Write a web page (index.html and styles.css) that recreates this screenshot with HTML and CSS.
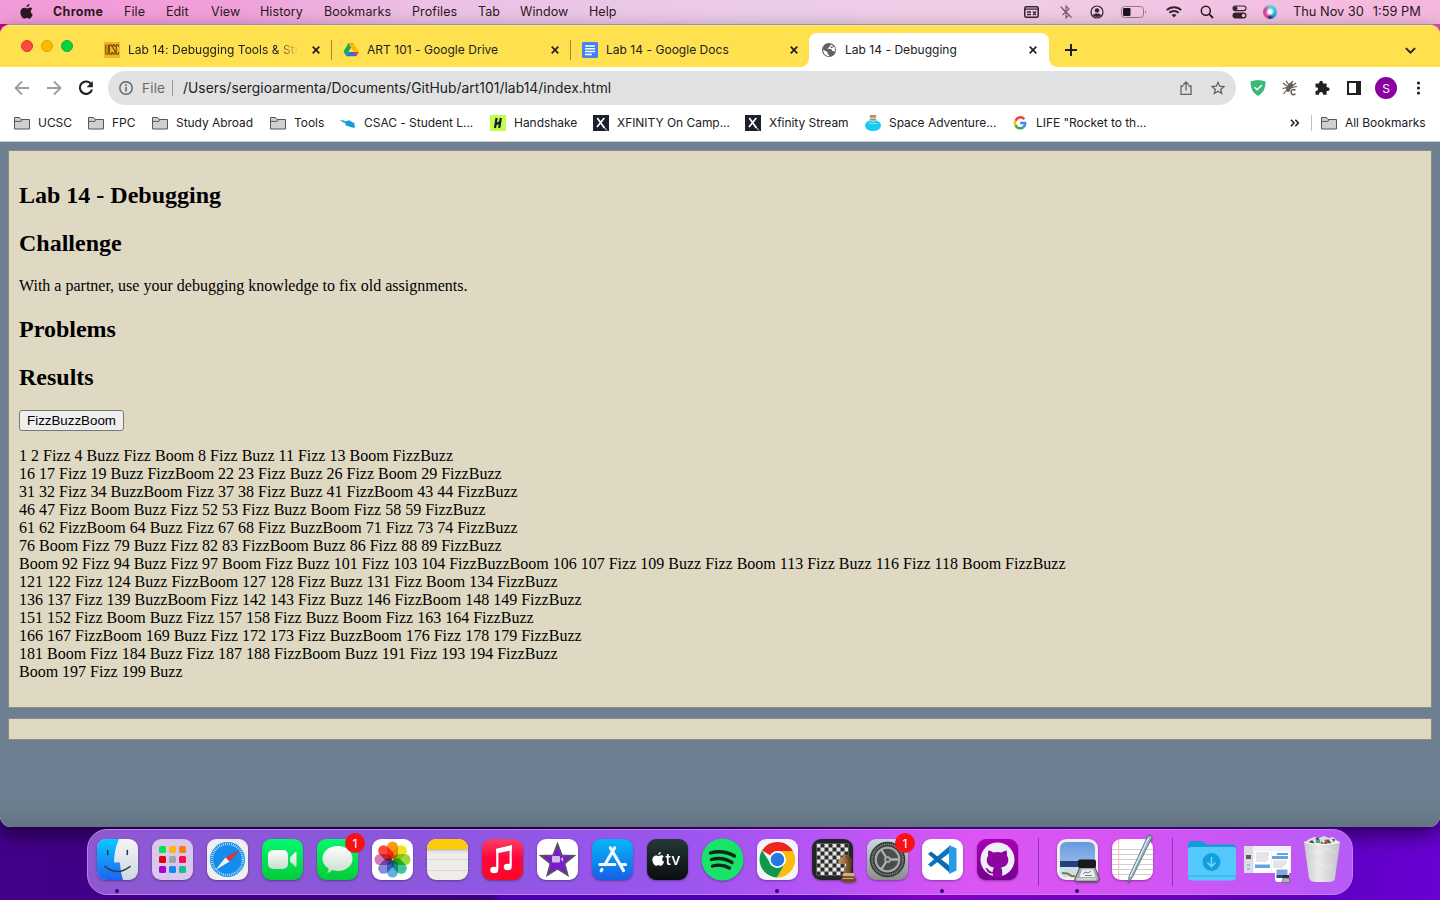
FILE: index.html
```html
<!DOCTYPE html>
<html lang="en">
<head>
<meta charset="utf-8">
<title>Lab 14 - Debugging</title>
<link rel="stylesheet" href="styles.css">
</head>
<body>
<svg width="0" height="0" class="defs"><defs>
  <path id="i-apple" d="M10.200 0c.1 1.300-1.200 3.200-3.200 3.400C6.800 1.900 8.300.2 10.200 0zM13.200 5.300c-2.400 1.500-2 4.700.5 5.700-.7 2-2 4.700-3.700 4.700-1 0-1.500-.6-2.700-.6s-1.800.6-2.700.6C2.500 15.700.4 12 .4 8.900c0-3.200 2-5 4.200-5 1.200 0 2.100.8 2.900.8.900 0 1.900-.9 3.300-.9 1 0 1.900.5 2.400 1.500z"/>
  <path id="i-x" d="M.7.7l6.600 6.600M7.300.7L.7 7.300"/>
  <g id="i-folder" stroke="#555"><path d="M.5 14v-11.500h5l1.500 2h8.500v9.500z" fill="#d0d0d0"/><path d="M1 6.400h6l1.200-1.600" fill="none"/></g>
  <g id="i-xf"><rect width="16" height="16" fill="#1c202e"/><path d="M4.300 3l7.200 10M11.300 3L4 12" stroke="#fff" stroke-width="1.700"/><path d="M10.500 11.500l3.500 4" stroke="#fff"/></g>
  <rect id="petal" x="15" y="2.500" width="11" height="17.500" rx="5.500"/>
  <linearGradient id="blue" x2="0" y2="1"><stop stop-color="#05cbff"/><stop offset="1" stop-color="#2261f2"/></linearGradient>
  <linearGradient id="silver" x2="0" y2="1"><stop stop-color="#f4f4f6"/><stop offset="1" stop-color="#cfd8e1"/></linearGradient>
  <linearGradient id="green" x2="0" y2="1"><stop stop-color="#04f971"/><stop offset="1" stop-color="#04cb39"/></linearGradient>
  <linearGradient id="red" x2="0" y2="1"><stop stop-color="#fb4166"/><stop offset=".45" stop-color="#ff073c"/><stop offset="1" stop-color="#fa0725"/></linearGradient>
  <linearGradient id="store" x2="0" y2="1"><stop stop-color="#05b7f7"/><stop offset="1" stop-color="#1760e5"/></linearGradient>
  <linearGradient id="black" x2="0" y2="1"><stop stop-color="#263737"/><stop offset="1" stop-color="#0a0d10"/></linearGradient>
  <linearGradient id="grey" x2="0" y2="1"><stop stop-color="#c8d8e1"/><stop offset="1" stop-color="#8d8d88"/></linearGradient>
  <linearGradient id="white" x2="0" y2="1"><stop stop-color="#fff"/><stop offset="1" stop-color="#c8ddce"/></linearGradient>
  <linearGradient id="sky" x2="0" y2="1"><stop stop-color="#6699df"/><stop offset="1" stop-color="#b2cbf0"/></linearGradient>
  <linearGradient id="hub" x2="0" y2="1"><stop stop-color="#a800b6"/><stop offset="1" stop-color="#74008c"/></linearGradient>
  <linearGradient id="wood" x2="1" y2="0"><stop stop-color="#c99a62"/><stop offset=".5" stop-color="#94693c"/><stop offset="1" stop-color="#49301c"/></linearGradient>
  <linearGradient id="can"><stop stop-color="#c8c9cb"/><stop offset=".4" stop-color="#eaeaea"/><stop offset="1" stop-color="#c3c4c6"/></linearGradient>
  <pattern id="chk" width="8" height="8" patternUnits="userSpaceOnUse"><path d="M0 0h8v8H0z" fill="#2b2b2b"/><path d="M0 0h4v4H0zM4 4h4v4H4z" fill="#e5e5e5"/></pattern>
  <clipPath id="tile"><rect width="41" height="41" rx="9"/></clipPath>
</defs></svg>
<div class="desktop">
<header class="menubar">
  <svg class="apple" viewBox="0 0 14 16"><use href="#i-apple"/></svg>
  <nav class="menus"><b>Chrome</b><span>File</span><span>Edit</span><span>View</span><span>History</span><span>Bookmarks</span><span>Profiles</span><span>Tab</span><span>Window</span><span>Help</span></nav>
  <div class="status">
    <svg width="15" height="12" viewBox="0 0 15 12"><rect x=".8" y=".8" width="13.400" height="10.400" rx="1.500" fill="none" stroke="#38222f" stroke-width="1.500"/><path d="M1 3.200h13M3 6h4M3 8.500h4M9 5.500l3 3.500M12 5.500L9 9" stroke="#38222f" stroke-width="1.300"/></svg>
    <svg width="12" height="14" viewBox="0 0 12 14"><path d="M2.500 10l6.500-6L6 1v12l3-3-6.500-6M.5 1.500l11 11" fill="none" stroke="#7b5a70" stroke-width="1.100"/></svg>
    <svg width="14" height="14" viewBox="0 0 14 14"><circle cx="7" cy="7" r="6" fill="none" stroke="#38222f" stroke-width="1.200"/><circle cx="7" cy="5.400" r="2.200" fill="#38222f"/><path d="M3 10.300c1-2.500 7-2.500 8 0-2 2.300-6 2.300-8 0z" fill="#38222f"/></svg>
    <svg width="26" height="12" viewBox="0 0 26 12"><rect x=".5" y=".5" width="22" height="11" rx="3" fill="none" stroke="#98758d"/><rect x="2" y="2" width="7.500" height="8" rx="1.300" fill="#20131b"/><path d="M24.300 4.200c1.300.6 1.300 3 0 3.600z" fill="#98758d"/></svg>
    <svg width="16" height="12" viewBox="0 0 16 12"><path d="M.8 4.200c4-4 10.400-4 14.400 0M3.300 6.800c2.700-2.500 6.700-2.500 9.400 0" fill="none" stroke="#38222f" stroke-width="1.900"/><path d="M5.600 9c1.500-1.300 3.300-1.300 4.800 0L8 11.600z" fill="#38222f"/></svg>
    <svg width="14" height="14" viewBox="0 0 14 14"><circle cx="5.800" cy="5.800" r="4.500" fill="none" stroke="#2b1824" stroke-width="1.500"/><path d="M9.200 9.200l3.800 3.800" stroke="#2b1824" stroke-width="1.800"/></svg>
    <svg width="15" height="14" viewBox="0 0 15 14"><rect x="1" y="1" width="13" height="4.600" rx="2.300" fill="none" stroke="#38222f" stroke-width="1.100"/><circle cx="3.500" cy="3.300" r="2" fill="#38222f"/><rect x=".5" y="7.500" width="14" height="6" rx="3" fill="#38222f"/><circle cx="11.500" cy="10.500" r="1.700" fill="#edc3e2"/></svg>
    <span class="siri"></span>
  </div>
  <div class="clock"><span>Thu Nov 30</span><span>1:59 PM</span></div>
</header>

<main class="window">
  <div class="tabs">
    <div class="lights"><i></i><i></i><i></i></div>
    <div class="tab"><svg class="fav" viewBox="0 0 16 16"><rect width="16" height="16" fill="#f7b318"/><path d="M1.800 2.500v8q0 2 1.200 2t1.200-2v-8M7.700 5V3.500q-1.200-2-2.300 0v8q1.100 2 2.300 0V10M11 5V3.500q-1.200-1.700-2.200 0v2.300L11 9v2.500q-1.100 2-2.200 0V10M14.400 5V3.500q-1.100-2-2.200 0v8q1.100 2 2.200 0V10" fill="none" stroke="#665019" stroke-width="1.100"/></svg><span class="title fade">Lab 14: Debugging Tools &amp; Str</span><svg class="x" viewBox="0 0 8 8"><use href="#i-x"/></svg></div>
    <div class="tab"><svg class="fav" viewBox="0 0 16 16"><path d="M5.400 1.200h5.200L5.500 10 3.200 14.200.5 9.500z" fill="#0da960"/><path d="M5.400 1.200h5.200L8 5.700z" fill="#188038"/><path d="M10.600 1.200L15.700 10h-5.200L5.400 1.200z" fill="#ffba00"/><path d="M3.200 14.200L5.700 10h10l-2.600 4.200z" fill="#2d6fdd"/><path d="M10.500 10h5.200l-2.600 4.200z" fill="#ea4335"/><path d="M8 5.700L10.500 10H5.600z" fill="#ffe14f"/></svg><span class="title">ART 101 - Google Drive</span><svg class="x" viewBox="0 0 8 8"><use href="#i-x"/></svg></div>
    <div class="tab"><svg class="fav" viewBox="0 0 16 16"><rect width="16" height="16" rx="1.500" fill="#4680f5"/><path d="M3 4h10M3 6.800h10M3 9.600h10M3 12.400h7" stroke="#fff" stroke-width="1.500"/></svg><span class="title">Lab 14 - Google Docs</span><svg class="x" viewBox="0 0 8 8"><use href="#i-x"/></svg></div>
    <div class="tab active"><svg class="fav" viewBox="0 0 16 16"><circle cx="8" cy="8" r="7" fill="#5f6368"/><path d="M2.200 7.800l4.300 2.300v1.500l1.600 1.600v1C4.500 14 2 11.300 2.200 7.800zM9.600 2.200v1.600L7.700 5v1.300L5.800 7h4.500l1 2h1.300l1 1c1-2.300.4-4.400-.8-5.600L11 6H9.700V4.500h2L12 3.700z" fill="#fff"/></svg><span class="title">Lab 14 - Debugging</span><svg class="x" viewBox="0 0 8 8"><use href="#i-x"/></svg></div>
    <svg class="plus" viewBox="0 0 12 12"><path d="M6 0v12M0 6h12"/></svg>
    <svg class="chev" viewBox="0 0 10 6"><path d="M.8.8L5 5 9.200.8"/></svg>
  </div>
  <div class="toolbar">
    <svg class="nav" viewBox="0 0 16 16"><path d="M15 8H2M8 1.500L1.500 8 8 14.500" stroke="#9e9e9e"/></svg>
    <svg class="nav" viewBox="0 0 16 16"><path d="M1 8h13M8 1.500L14.500 8 8 14.500" stroke="#9e9e9e"/></svg>
    <svg class="nav" viewBox="0 0 16 16"><path d="M13.400 4.500A6.200 6.200 0 1 0 14 9.500" stroke="#202124" stroke-width="2.100"/><path d="M14.800 1v6.200H8.600z" fill="#202124"/></svg>
    <div class="omni">
      <svg width="14" height="14" viewBox="0 0 14 14"><circle cx="7" cy="7" r="6.200" fill="none" stroke="#5f6368" stroke-width="1.400"/><path d="M7 6v4.600M7 3.300v1.600" stroke="#5f6368" stroke-width="1.500"/></svg>
      <span class="scheme">File</span><i></i><span class="url">/Users/sergioarmenta/Documents/GitHub/art101/lab14/index.html</span>
      <svg class="share" width="12" height="14" viewBox="0 0 12 14"><path d="M3.500 5H1v8.300h10V5H8.500M6 9.500V1M3.300 3.700L6 1l2.700 2.700" fill="none" stroke="#5f6368" stroke-width="1.300"/></svg>
      <svg width="14" height="14" viewBox="0 0 14 14"><path d="M7 1.300l1.700 3.900 4.200.4-3.200 2.800 1 4.100L7 10.300l-3.700 2.200 1-4.100L1.100 5.600l4.200-.4z" fill="none" stroke="#5f6368" stroke-width="1.300"/></svg>
    </div>
    <div class="exts">
      <svg viewBox="0 0 16 16"><path d="M8 0c2.500 0 5 .5 7.500 1.500 0 6-1.500 11-7.500 14.500C2 12.500.5 7.500.5 1.500 3 .5 5.500 0 8 0z" fill="#3bb877"/><path d="M4.500 7.200l2.700 2.600L11.800 5" fill="none" stroke="#fff" stroke-width="1.500"/></svg>
      <svg viewBox="0 0 16 16"><path d="M4 .8l2.200 3M11 .8L8.800 3.800M1 3l4 3M14 3l-4 3M.5 8.500L5 7.600M15 6.500l-5 .8M1.500 14L5 9.500" stroke="#675f57" fill="none" stroke-width="1.200"/><ellipse cx="7.500" cy="7.200" rx="2.700" ry="5" transform="rotate(25 7.500 7.200)" fill="#675f57"/><path d="M13.500 10.200q-4-2-4.500 1.800 .5 4 4.500 2" fill="none" stroke="#fff" stroke-width="3"/><path d="M13.500 10.200q-4-2-4.500 1.800 .5 4 4.500 2" fill="none" stroke="#675f57" stroke-width="1.600"/></svg>
      <svg viewBox="0 0 16 16"><path d="M1.500 3.500h3.800c-.8-3.700 4.300-3.700 3.600 0h3.700v3.700c4-.7 4 4.400 0 3.700v3.900H9c.6-3.700-4.500-3.700-3.900 0H1.500v-3.900c3.400.4 3.400-4 0-3.600z" fill="#202124"/></svg>
      <svg viewBox="0 0 16 16"><rect x="2" y="2" width="12" height="12" fill="none" stroke="#202124" stroke-width="2"/><path d="M10 2h4v12h-4z" fill="#202124"/></svg>
      <span class="avatar">S</span>
      <svg viewBox="0 0 16 16"><g fill="#202124"><circle cx="8.500" cy="3" r="1.600"/><circle cx="8.500" cy="8" r="1.600"/><circle cx="8.500" cy="13" r="1.600"/></g></svg>
    </div>
  </div>
  <div class="bookmarks">
    <div><svg viewBox="0 0 16 16"><use href="#i-folder"/></svg><span>UCSC</span></div>
    <div><svg viewBox="0 0 16 16"><use href="#i-folder"/></svg><span>FPC</span></div>
    <div><svg viewBox="0 0 16 16"><use href="#i-folder"/></svg><span>Study Abroad</span></div>
    <div><svg viewBox="0 0 16 16"><use href="#i-folder"/></svg><span>Tools</span></div>
    <div><svg viewBox="0 0 16 16"><path d="M.3 5.200l4 .3.800 1 4-1.200 6 3.500-.8.700.9 3-2 .2-2.700-.7-4.500-1.500L5 8 1 6.300z" fill="#159bd5"/></svg><span>CSAC - Student L...</span></div>
    <div><svg viewBox="0 0 16 16"><rect width="16" height="16" fill="#c5fc4c"/><path d="M6.600 3L5 13M10.800 3L9.200 13M5.800 9.200l4.300-2" stroke="#111e25" stroke-width="2.200"/></svg><span>Handshake</span></div>
    <div><svg viewBox="0 0 16 16"><use href="#i-xf"/></svg><span>XFINITY On Camp...</span></div>
    <div><svg viewBox="0 0 16 16"><use href="#i-xf"/></svg><span>Xfinity Stream</span></div>
    <div><svg viewBox="0 0 16 16"><ellipse cx="8" cy="10.500" rx="8" ry="5.500" fill="#1bc9f5"/><path d="M5.500 3h5v4h-5z" fill="#93d6d0"/><path d="M4.800 0h6.400v2.800H4.800zM4.600 4h6.800v1.300H4.600z" fill="#b09365"/><path d="M4 8.500h8" stroke="#78e9ff"/></svg><span>Space Adventure...</span></div>
    <div><svg viewBox="0 0 16 16"><g fill="none" stroke-width="2.500"><path d="M12.300 4.300A5 5 0 0 0 3.600 5.800" stroke="#ea4335"/><path d="M3.600 5.500a5.200 5.200 0 0 0 0 5" stroke="#fbbc04"/><path d="M3.500 10.200a5 5 0 0 0 7.800 2" stroke="#34a853"/><path d="M8.200 8h5a5 5 0 0 1-2 4.300" stroke="#4285f4"/></g></svg><span>LIFE "Rocket to th...</span></div>
    <svg class="more" viewBox="0 0 10 8"><path d="M1 .8L4 4 1 7.200M5.300.8l3 3.200-3 3.200"/></svg>
    <div class="all"><svg viewBox="0 0 16 16"><use href="#i-folder"/></svg><span>All Bookmarks</span></div>
  </div>
  <div class="page">
    <section class="box">
      <h2>Lab 14 - Debugging</h2>
      <h2>Challenge</h2>
      <p>With a partner, use your debugging knowledge to fix old assignments.</p>
      <h2>Problems</h2>
      <h2>Results</h2>
      <button>FizzBuzzBoom</button>
      <p class="output">1 2 Fizz 4 Buzz Fizz Boom 8 Fizz Buzz 11 Fizz 13 Boom FizzBuzz<br>
16 17 Fizz 19 Buzz FizzBoom 22 23 Fizz Buzz 26 Fizz Boom 29 FizzBuzz<br>
31 32 Fizz 34 BuzzBoom Fizz 37 38 Fizz Buzz 41 FizzBoom 43 44 FizzBuzz<br>
46 47 Fizz Boom Buzz Fizz 52 53 Fizz Buzz Boom Fizz 58 59 FizzBuzz<br>
61 62 FizzBoom 64 Buzz Fizz 67 68 Fizz BuzzBoom 71 Fizz 73 74 FizzBuzz<br>
76 Boom Fizz 79 Buzz Fizz 82 83 FizzBoom Buzz 86 Fizz 88 89 FizzBuzz<br>
Boom 92 Fizz 94 Buzz Fizz 97 Boom Fizz Buzz 101 Fizz 103 104 FizzBuzzBoom 106 107 Fizz 109 Buzz Fizz Boom 113 Fizz Buzz 116 Fizz 118 Boom FizzBuzz<br>
121 122 Fizz 124 Buzz FizzBoom 127 128 Fizz Buzz 131 Fizz Boom 134 FizzBuzz<br>
136 137 Fizz 139 BuzzBoom Fizz 142 143 Fizz Buzz 146 FizzBoom 148 149 FizzBuzz<br>
151 152 Fizz Boom Buzz Fizz 157 158 Fizz Buzz Boom Fizz 163 164 FizzBuzz<br>
166 167 FizzBoom 169 Buzz Fizz 172 173 Fizz BuzzBoom 176 Fizz 178 179 FizzBuzz<br>
181 Boom Fizz 184 Buzz Fizz 187 188 FizzBoom Buzz 191 Fizz 193 194 FizzBuzz<br>
Boom 197 Fizz 199 Buzz</p>
    </section>
    <section class="box"></section>
  </div>
</main>

<footer class="dock">
  <div class="app run"><svg viewBox="0 0 41 41"><g clip-path="url(#tile)"><path d="M0 0h41v41H0z" fill="url(#silver)"/><path d="M0 0h22q-5 11-5 23.500h6q0 9 3 17.500H0z" fill="url(#blue)"/></g><path d="M8 27.500q12.500 10 25 0M10.700 11.500v4M30.300 11.500v4" fill="none" stroke="#243b50" stroke-width="1.600" stroke-linecap="round"/></svg></div>
  <div class="app"><svg viewBox="0 0 41 41"><rect width="41" height="41" rx="9" fill="#dac7ee"/><g><rect x="7" y="7" width="7" height="7" rx="1.500" fill="#10df4d"/><rect x="17" y="7" width="7" height="7" rx="1.500" fill="#fdb90b"/><rect x="27" y="7" width="7" height="7" rx="1.500" fill="#f97d0c"/><rect x="7" y="17" width="7" height="7" rx="1.500" fill="#e20309"/><rect x="17" y="17" width="7" height="7" rx="1.500" fill="#a0a5aa"/><rect x="27" y="17" width="7" height="7" rx="1.500" fill="#fb0850"/><rect x="7" y="27" width="7" height="7" rx="1.500" fill="#a707cb"/><rect x="17" y="27" width="7" height="7" rx="1.500" fill="#1289f3"/><rect x="27" y="27" width="7" height="7" rx="1.500" fill="#15bd91"/></g></svg></div>
  <div class="app"><svg viewBox="0 0 41 41"><rect width="41" height="41" rx="9" fill="#efefef"/><circle cx="20.500" cy="20.500" r="17.500" fill="#148ced"/><circle cx="20.500" cy="20.500" r="15.500" fill="none" stroke="#cbe9ff" stroke-width="2.500" stroke-dasharray=".8 1.200"/><path d="M33 10.500L22.500 22.500l-4-4z" fill="#ed302c"/><path d="M8.500 31L18.500 18.500l4 4z" fill="#f2f5f7"/></svg></div>
  <div class="app"><svg viewBox="0 0 41 41"><rect width="41" height="41" rx="9" fill="url(#green)"/><rect x="6" y="11" width="20" height="19" rx="5" fill="url(#white)"/><path d="M28 18.500l5.500-5.500q1-.5 1 .8v13.500q0 1-1 .5L28 22.500z" fill="url(#white)"/></svg></div>
  <div class="app"><svg viewBox="0 0 41 41"><rect width="41" height="41" rx="9" fill="url(#green)"/><path d="M20.500 7C29 7 35.500 12.500 35.500 19.700S29 32 20.500 32c-2 0-4-.3-5.500-.9-1.500 1.600-3 2.600-5 2.900 1.300-1.500 1.700-3 1.500-4.700C7.500 27 5.500 23.500 5.500 19.700 5.500 12.500 12 7 20.500 7z" fill="url(#white)"/></svg><span class="badge">1</span></div>
  <div class="app"><svg viewBox="0 0 41 41"><rect width="41" height="41" rx="9" fill="#fff"/><g class="petals"><use href="#petal" fill="#fb9a1b"/><use href="#petal" fill="#ece51b" transform="rotate(45 20.500 20.500)"/><use href="#petal" fill="#9bd83c" transform="rotate(90 20.500 20.500)"/><use href="#petal" fill="#3cc796" transform="rotate(135 20.500 20.500)"/><use href="#petal" fill="#5fb1e2" transform="rotate(180 20.500 20.500)"/><use href="#petal" fill="#8a8ad6" transform="rotate(225 20.500 20.500)"/><use href="#petal" fill="#d07cbc" transform="rotate(270 20.500 20.500)"/><use href="#petal" fill="#fa4a40" transform="rotate(315 20.500 20.500)"/></g></svg></div>
  <div class="app"><svg viewBox="0 0 41 41"><g clip-path="url(#tile)"><path d="M0 0h41v41H0z" fill="#efedea"/><path d="M0 0h41v10.500H0z" fill="#fecb08"/><path d="M0 11h41" stroke="#b5afa4"/><path d="M0 20.500h41M0 31.500h41" stroke="#d3d0cc" stroke-width=".8"/><path d="M1 13h39" stroke="#c9c5bf" stroke-dasharray="1 1"/></g></svg></div>
  <div class="app"><svg viewBox="0 0 41 41"><rect width="41" height="41" rx="9" fill="url(#red)"/><path d="M15.300 30V11l13.400-3.300V27" fill="none" stroke="#fff" stroke-width="2.200"/><path d="M14.200 9.800l15.600-3.500v4.900L14.200 14.500z" fill="#fff"/><ellipse cx="12.200" cy="31" rx="4" ry="3.200" fill="#fff"/><ellipse cx="25.700" cy="28" rx="4" ry="3.200" fill="#fff"/></svg></div>
  <div class="app"><svg viewBox="0 0 41 41"><rect width="41" height="41" rx="9" fill="#fff"/><path d="M20.500 5l4.300 11.300 12.200.5-9.500 7.700 3.100 11.500-10.100-6.300L10.400 36l3.100-11.500L4 16.800l12.200-.5z" fill="#8017d5" stroke="#555263" stroke-width="1.800"/><rect x="15" y="17" width="8" height="6.500" rx="1" fill="#cebde3"/><path d="M23.500 20l2.600-2v5z" fill="#cebde3"/></svg></div>
  <div class="app"><svg viewBox="0 0 41 41"><rect width="41" height="41" rx="9" fill="url(#store)"/><path d="M18.300 8.800L31.500 31.500M22.700 8.800L13 25.500M10 30.500l-.8 1.200M7.800 25.500h15M29.500 25.500h4" fill="none" stroke="#edf7ff" stroke-width="3.200" stroke-linecap="round"/></svg></div>
  <div class="app"><svg viewBox="0 0 41 41"><rect width="41" height="41" rx="9" fill="url(#black)"/><use href="#i-apple" transform="translate(5 13) scale(.88)" fill="#fff"/><text x="18.500" y="26.300" class="tv">tv</text></svg></div>
  <div class="app"><svg viewBox="0 0 41 41"><circle cx="20.500" cy="20.500" r="21" fill="#17e469"/><path d="M8.500 14q12-3.500 24 3M9.500 20.500q11-3 20.500 3M10.500 27q9.500-2.500 17 2" fill="none" stroke="#10251b" stroke-width="3.300" stroke-linecap="round"/></svg></div>
  <div class="app run"><svg viewBox="0 0 41 41"><rect width="41" height="41" rx="9" fill="#f5f3fb"/><path d="M20.500 20.500L5 11.500A18 18 0 0 1 36 12H20.500z" fill="#e92620"/><path d="M5 11.500A18 18 0 0 0 20 38.500l8-13.500-14 0z" fill="#10994b"/><path d="M20.500 12H36A18 18 0 0 1 20 38.500L28 25z" fill="#fcbc0a"/><circle cx="20.500" cy="20.500" r="8.500" fill="#fff"/><circle cx="20.500" cy="20.500" r="6.800" fill="#2577e5"/></svg></div>
  <div class="app"><svg viewBox="0 0 41 41"><rect width="41" height="41" rx="9" fill="#242326"/><rect width="32" height="32" fill="url(#chk)" transform="translate(4.500 4.500)"/><path d="M31.500 13.500l2.500 2c5 2 7.500 6 6 11q-1.500 4-1 8.500h-7.500q0-5 2.500-8.500l.5-3-5 2-3.500-2 1-3 4-3.500z" fill="url(#wood)"/><path d="M34 17q5 4 3.500 9" stroke="#5b3d22" fill="none"/><rect x="30.500" y="34" width="12" height="3.500" rx="1.700" fill="#d3ad7c"/><path d="M31 37.500h11l2.500 3q0 3-8 3t-8-3z" fill="#6b4a2a"/><path d="M30.500 39.500h11" stroke="#c79e68" stroke-width="1.200"/></svg></div>
  <div class="app"><svg viewBox="0 0 41 41"><rect width="41" height="41" rx="9" fill="url(#grey)"/><circle cx="20.500" cy="20.500" r="17.800" fill="#35383a"/><circle cx="20.500" cy="20.500" r="15.300" fill="none" stroke="#7f8383" stroke-width="2" stroke-dasharray="1.200 .8"/><circle cx="20.500" cy="20.500" r="11.800" fill="#4a4d4e" stroke="#a6a9a9" stroke-width="2.300"/><path d="M20.500 20.500h11M20.500 20.500L14.500 11M20.500 20.500L14.500 30" stroke="#b0b3b3" stroke-width="2.300"/><circle cx="20.500" cy="20.500" r="2.600" fill="#595c5d" stroke="#b0b3b3" stroke-width="1.500"/></svg><span class="badge">1</span></div>
  <div class="app run"><svg viewBox="0 0 41 41"><rect width="41" height="41" rx="9" fill="#fff"/><path d="M6 25.500l3 2.500 19-14.500V6.500z" fill="#0876be"/><path d="M6 15l3-2.500 19 14.500v7z" fill="#0b69ad"/><path d="M27 6l7.500 3.500v22L27 35z" fill="#269ce8"/></svg></div>
  <div class="app"><svg viewBox="0 0 41 41"><rect width="41" height="41" rx="9" fill="url(#hub)"/><circle cx="20.500" cy="20.500" r="17" fill="#efedf6"/><path d="M11.500 11.500q2.800.4 5 2 4-1 8 0 2.500-1.700 5-2 1 2.500.3 5 1.700 2 1.500 5-.3 6-7.300 7 1.200 1.500 1.200 4v6h-9.400v-4q-4.300.6-5.800-2.500-.8-2-2-2.800 2.500-.5 4 2 1.500 2 3.800 1.200.2-2.500 1.200-3.900-7-1-7.300-7 0-3 1.500-5-.7-2.500.3-5z" fill="#8d05a0"/></svg></div>
  <i class="sep first"></i>
  <div class="app run"><svg viewBox="0 0 41 41"><rect width="41" height="41" rx="9" fill="#efeff2"/><rect x="3" y="3" width="35" height="35" rx="6" fill="url(#sky)"/><path d="M3 22h35v7H3z" fill="#293d7f"/><path d="M3 28h35v4q0 6-6 6H9q-6 0-6-6z" fill="#c7e3e8"/><path d="M5 34q6 0 8 2t5 1" stroke="#8e7046" stroke-width="2" fill="none"/><path d="M23 28h15l4 11.500q0 3-3 3H21q-4 0-3-3z" fill="#a8adaf" stroke="#4d5256"/><rect x="21" y="20.500" width="18" height="8.500" rx="2" fill="#17191c"/><path d="M25 30.500h11l2.500 7.500H22.500z" fill="#eef1f2"/><path d="M26 35l2-2 3 1 3-2M28 36.500h7" stroke="#4f6b78" stroke-width=".8" fill="none"/><path d="M20 40h19" stroke="#e8eaea" stroke-width="1.200"/></svg></div>
  <div class="app"><svg viewBox="0 0 41 41"><rect width="41" height="41" rx="9" fill="#fff"/><path d="M0 10.500h41M0 15.500h41M0 20.500h41M0 25.500h41M0 30.500h41M2 35.500h37" stroke="#c9c9cc" stroke-width=".9"/><path d="M6.700 1v39" stroke="#f5b9b9"/><path d="M36-3.500l3-.5 1 2.500L20.500 38l-4 6 .5-6.500z" fill="#94b1bf" stroke="#4e6470" stroke-width=".8"/><path d="M36.500-1L18 38" stroke="#e5f2f7" stroke-width="1.200"/></svg></div>
  <i class="sep second"></i>
  <svg class="folder" viewBox="0 0 48 42"><path d="M0 6q0-4 4-4h9q3 0 5 3.500h26q4 0 4 4v28H0z" fill="#119dd6"/><path d="M0 11q0-3 3-3h42q3 0 3 3v27q0 3.500-3.500 3.500h-41Q0 41.500 0 38z" fill="#54c9fb"/><path d="M0 37h48" stroke="#35a6df"/><circle cx="23.500" cy="23" r="9" fill="#119fdd"/><path d="M23.500 18v9M19.500 23.500l4 4 4-4" fill="none" stroke="#71d7ff" stroke-width="1.600"/></svg>
  <svg class="mini" viewBox="0 0 49 42"><rect x="1" y="7" width="47" height="27" fill="#f1f2f5"/><rect x="1" y="7" width="9" height="27" fill="#dcdde2"/><path d="M3 16h5v4H3z" fill="#665753"/><path d="M4 25h3v2H4zM4 29h3v2H4z" fill="#8bc1eb"/><path d="M11 12h17v22H11zM29 12h17v22H29z" fill="#fff"/><path d="M13 14h13M13 16h13M13 18h12M13 20h13M13 22h11M30 22h14M30 24h14M30 26h12M30 28h10" stroke="#b3b4bc" stroke-width=".7"/><path d="M34 14h11v2H34zM29 17h16v3H29zM12 25.500h15v3.500H12z" fill="#65a5df"/><rect x="32" y="29" width="14" height="14" rx="3" fill="#fff"/><path d="M33.500 30.500h11v7h-11z" fill="#7fa6df"/><path d="M33.500 36h11v3h-11z" fill="#294580"/><path d="M40 36h6v3h-6z" fill="#292c30"/><path d="M40 39h6l1 4.500h-8z" fill="#b0b4b6" stroke="#555" stroke-width=".6"/></svg>
  <svg class="trash" viewBox="0 0 38 48"><path d="M2 7l4-3 5-2 5 1 5-2 5 2 4-1 6 5-2 4H5z" fill="#d9dcde"/><path d="M5 8l4-3 3 4zM12 4l3-2 2 4zM20 9l5-5 4 5zM29 4l3 0-1 3z" fill="#4b4644"/><path d="M13 5h4v3h-4z" fill="#31ad93"/><path d="M22 5l4 4M18 7l2 2" stroke="#b95838" stroke-width="1.800"/><path d="M1 7q18 5 36 0l-5 36q0 4-7 4H13q-6 0-7-4z" fill="url(#can)"/><path d="M1 7q18 5 36 0" fill="none" stroke="#fafafa" stroke-width="1.200"/><path d="M6 16q9 4 14 0t12 2M8 30q8-4 13 1t9-3" fill="none" stroke="#fff" stroke-width="3" opacity=".15"/></svg>
</footer>
</div>
</body>
</html>
```
FILE: styles.css
```css
* { box-sizing: border-box; }
body { margin: 0; font-family: Inter, "Liberation Sans", sans-serif; color: #202124; }
svg { display: block; flex: none; overflow: visible; }
.desktop { width: 1440px; height: 900px; overflow: hidden; display: flex; flex-direction: column;
  background: linear-gradient(90deg, transparent 0 34%, #4a00b0 35% 57%, transparent 62%) 0 890px / 100% 10px no-repeat,
  linear-gradient(100deg, #c800a0 0, #9b008b 25%, #92748d 45%, #a28099 70%, #e34aa8 100%) 0 0 / 100% 100px no-repeat,
  linear-gradient(90deg, #43008a 0, #380078 40%, #8000c8 65%, #5b00bd 90%, #6900d4 100%); }

.menubar { height: 24px; flex: none; display: flex; align-items: center; padding-left: 20px; font-size: 13px; color: #2b1824;
  background: linear-gradient(90deg, #f39bd9 0, #f09fd9 16%, #ebc0e4 29%, #ebcce8 52%, #efcde6 70%, #f5b7dd 100%); }
.apple { width: 13px; height: 15px; fill: #2b1824; margin-top: -2px; }
.menus { display: flex; margin-left: 20px; width: 960px; margin-top: -1px; white-space: nowrap; font-size: 12.500px; letter-spacing: .08px; }
.menus > * { flex: none; }
.menus :nth-child(1) { width: 71px; letter-spacing: .3px; }
.menus :nth-child(2) { width: 42px; }
.menus :nth-child(3) { width: 45px; }
.menus :nth-child(4) { width: 49px; }
.menus :nth-child(5) { width: 64px; }
.menus :nth-child(6) { width: 88px; }
.menus :nth-child(7) { width: 66px; }
.menus :nth-child(8) { width: 42px; }
.menus :nth-child(9) { width: 69px; }
.status { display: grid; grid-template-columns: 36px 34px 28px 46px 34px 32px 32px 30px; place-items: center; }
.siri { width: 14px; height: 14px; border-radius: 50%; background: radial-gradient(circle, #fff 0 15%, transparent 45%), conic-gradient(#53dbe5, #2fc0d0 25%, #278fda 40%, #1d3672 50%, #e84a98 60%, #d93b97 80%, #53dbe5); }
.clock { display: flex; gap: 9px; margin-left: 8px; margin-top: -1px; font-size: 12.800px; white-space: nowrap; }

.window { height: 803px; flex: none; border-radius: 10px 10px 11px 11px; overflow: hidden; background: #fff; display: flex; flex-direction: column; border-top: 1px solid #a2957c; box-shadow: 0 8px 20px rgba(0,0,0,.55); }
.tabs { height: 42px; flex: none; display: flex; background: #ffe14f; padding: 7px 24px 0 27px; align-items: center; border-top: 1px solid #f5e493; }
.lights { display: flex; gap: 8px; width: 65px; margin-top: -8px; }
.lights i { width: 12px; height: 12px; border-radius: 50%; background: #ff4640; border: 1px solid #de3832; margin-left: -6px; margin-right: 6px; }
.lights i:nth-child(2) { background: #ffbb02; border-color: #dfa100; }
.lights i:nth-child(3) { background: #07d143; border-color: #11ae38; }
.tab { width: 239px; height: 34px; display: flex; align-items: center; padding: 0 11px 0 12px; position: relative; flex: none; }
.tab:nth-child(2)::after, .tab:nth-child(3)::after { content: ""; position: absolute; right: -1px; top: 7px; width: 1px; height: 20px; background: #9b8b42; }
.fav { width: 16px; height: 16px; }
.title { margin-left: 8px; font-size: 12px; letter-spacing: .03px; white-space: nowrap; margin-top: -1px; }
.fade { -webkit-mask-image: linear-gradient(90deg, #000 86%, transparent); mask-image: linear-gradient(90deg, #000 86%, transparent); }
.x { width: 8px; height: 8px; margin-left: auto; stroke: #202124; stroke-width: 1.700; }
.tab.active { width: 240px; padding-right: 12px; background: #fff; border-radius: 8px 8px 0 0; }
.active::before, .active::after { content: ""; position: absolute; bottom: 0; width: 8px; height: 8px; }
.active::before { left: -8px; background: radial-gradient(circle at 0 0, transparent 7.500px, #fff 8px); }
.active::after { right: -8px; background: radial-gradient(circle at 100% 0, transparent 7.500px, #fff 8px); }
.plus { width: 12px; height: 12px; margin-left: 16px; stroke: #202124; stroke-width: 2; }
.chev { width: 11px; height: 7px; margin-left: auto; fill: none; stroke: #202124; stroke-width: 1.700; }

.toolbar { height: 42px; flex: none; display: flex; align-items: center; padding-left: 14px; }
.nav { width: 16px; height: 16px; margin-right: 16px; fill: none; stroke-width: 1.800; }
.nav:nth-child(3) { margin-right: 14px; }
.omni { width: 1128px; height: 34px; border-radius: 17px; background: #e1e1e1; display: flex; align-items: center; padding: 0 11px; }
.scheme { width: 30px; margin-left: 9px; color: #686a6d; font-size: 13.500px; letter-spacing: .2px; }
.omni i { width: 1px; height: 16px; background: #99999b; }
.url { margin-left: 10px; font-size: 13.800px; letter-spacing: .055px; white-space: nowrap; }
.share { margin-left: auto; margin-right: 19px; }
.exts { display: flex; gap: 16px; align-items: center; margin-left: 14px; }
.exts svg { width: 16px; height: 16px; }
.avatar { width: 22px; height: 22px; margin: 0 -3px; border-radius: 50%; background: #8a00a0; color: #fff; font-size: 12px; display: grid; place-items: center; }

.bookmarks { height: 33px; flex: none; display: flex; align-items: center; padding: 0 15px 5px 14px; border-bottom: 1px solid #c7cdd2; font-size: 12px; letter-spacing: -.04px; white-space: nowrap; }
.bookmarks > div { display: flex; gap: 8px; align-items: center; flex: none; }
.bookmarks div svg { width: 16px; height: 16px; }
.bookmarks div:nth-child(1) { width: 74px; }
.bookmarks div:nth-child(2) { width: 64px; }
.bookmarks div:nth-child(3) { width: 118px; }
.bookmarks div:nth-child(4) { width: 70px; }
.bookmarks div:nth-child(5) { width: 150px; }
.bookmarks div:nth-child(6) { width: 103px; }
.bookmarks div:nth-child(7) { width: 152px; }
.bookmarks div:nth-child(8) { width: 120px; }
.bookmarks div:nth-child(9) { width: 147px; }
.more { width: 10px; height: 8px; margin-left: auto; fill: none; stroke: #202124; stroke-width: 1.600; }
.bookmarks .all { width: 114px; margin-left: 11px; padding-left: 9px; border-left: 1px solid #bfc1c4; height: 16px; }

.page { flex: 1; padding: 8px; color: #000; font-family: "Liberation Serif", serif; font-size: 16px; line-height: 18px;
  background: #6d7f90; box-shadow: inset 0 -28px 24px -24px #00000026; }
.box { border: 1px solid #8d8c87; background: #dfd9c3; padding: 10px; margin-bottom: 10px; display: flow-root; }
h2 { font-size: 24px; line-height: 28px; margin: 20px 0; }
p { margin: 20px 0; }
button { display: block; width: 105px; height: 21px; margin-top: -1px; padding: 0; font: 13.333px "Liberation Sans", sans-serif; background: #efefef; border: 1px solid #767676; border-radius: 3px; color: #000; }
.output { margin: 16px 0; }

.dock { width: 1266px; height: 66px; flex: none; margin: 2px 0 0 87px; border: 1px solid #c77df0; border-radius: 20px; padding: 9px; display: flex; align-items: flex-start; position: relative;
  background: linear-gradient(90deg, #8e58d1 0, #8b58dc 24%, #9a55ee 46%, #b555f5 58%, #db55f4 70%, #d654f4 82%, #b65bf7 100%); }
.defs { position: absolute; }
.app { position: relative; width: 41px; height: 41px; flex: none; margin-right: 14px; }
.app > svg { width: 41px; height: 41px; filter: drop-shadow(0 1px 1px rgba(0,0,0,.35)); }
.petals use { mix-blend-mode: multiply; }
.run::after { content: ""; position: absolute; left: 18px; top: 50px; width: 4px; height: 4px; border-radius: 50%; background: #340066; }
.badge { position: absolute; left: 28px; top: -6px; width: 20px; height: 20px; border-radius: 50%; background: #fb1018; color: #fff; font-size: 12px; display: grid; place-items: center; }
.tv { font: 500 16px Inter, sans-serif; fill: #fff; }
.sep { width: 1px; height: 48px; margin-top: -1px; background: #8d31b1; flex: none; }
.first { margin-left: 6px; margin-right: 18px; }
.second { margin-left: 5px; margin-right: 15px; }
.folder { width: 48px; height: 42px; }
.mini { width: 49px; height: 42px; margin-left: 7px; }
.trash { width: 38px; height: 48px; margin-left: 11px; margin-top: -4px; }
```
